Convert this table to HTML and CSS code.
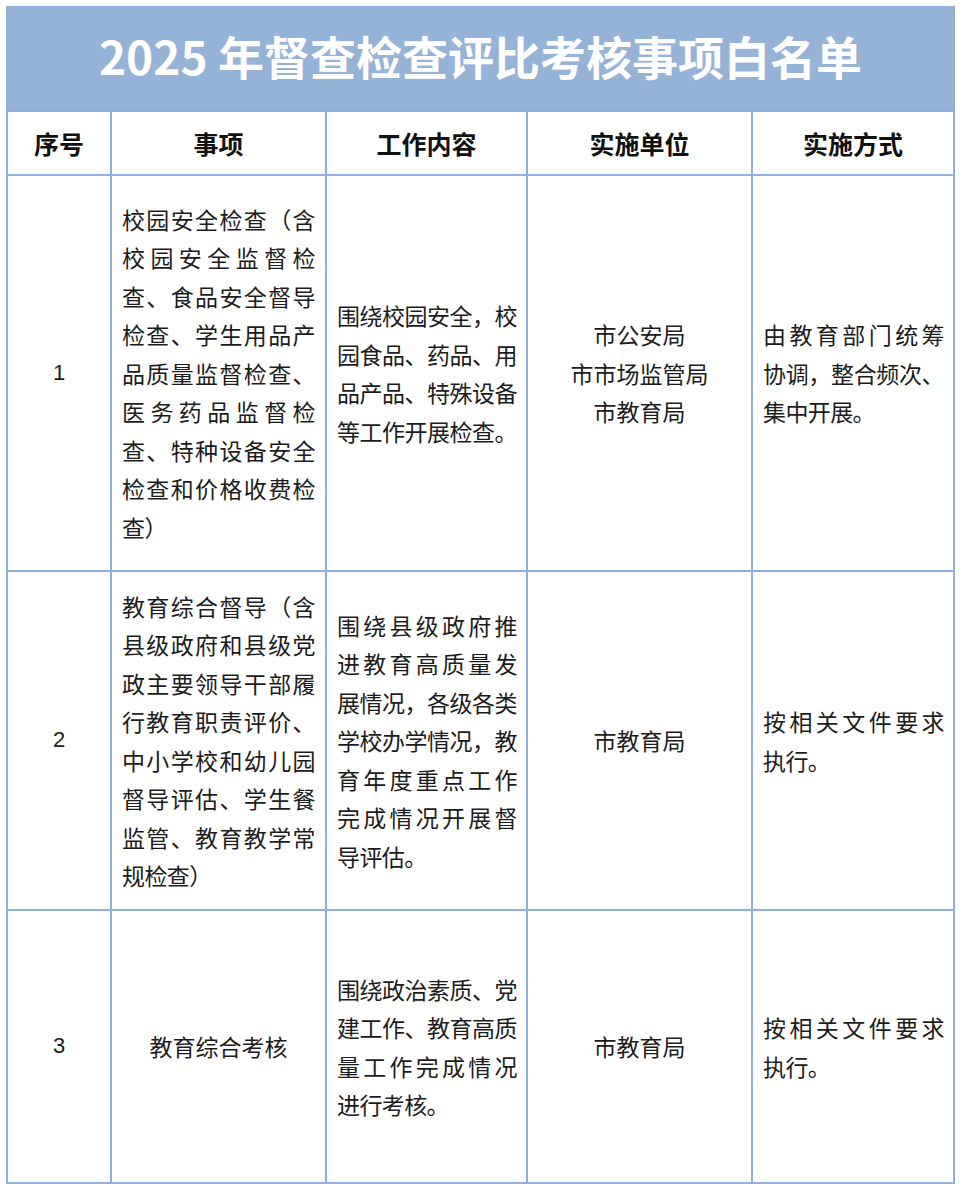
FILE: index.html
```html
<!DOCTYPE html>
<html lang="zh-CN">
<head>
<meta charset="utf-8">
<title>2025 年督查检查评比考核事项白名单</title>
<link rel="stylesheet" href="styles.css">
</head>
<body>
<div class="sheet">
  <div class="title">2025 年督查检查评比考核事项白名单</div>

  <div class="cell head">序号</div>
  <div class="cell head">事项</div>
  <div class="cell head">工作内容</div>
  <div class="cell head">实施单位</div>
  <div class="cell head">实施方式</div>

  <div class="cell num">1</div>
  <div class="cell text c2">
    <div class="ln">校园安全检查（含</div>
    <div class="ln">校园安全监督检</div>
    <div class="ln">查、食品安全督导</div>
    <div class="ln">检查、学生用品产</div>
    <div class="ln">品质量监督检查、</div>
    <div class="ln">医务药品监督检</div>
    <div class="ln">查、特种设备安全</div>
    <div class="ln">检查和价格收费检</div>
    <div class="ln end">查）</div>
  </div>
  <div class="cell text c3">
    <div class="ln">围绕校园安全，校</div>
    <div class="ln">园食品、药品、用</div>
    <div class="ln">品产品、特殊设备</div>
    <div class="ln">等工作开展检查。</div>
  </div>
  <div class="cell center">
    <div>市公安局</div>
    <div>市市场监管局</div>
    <div>市教育局</div>
  </div>
  <div class="cell text c5">
    <div class="ln">由教育部门统筹</div>
    <div class="ln">协调，整合频次、</div>
    <div class="ln end">集中开展。</div>
  </div>

  <div class="cell num">2</div>
  <div class="cell text c2">
    <div class="ln">教育综合督导（含</div>
    <div class="ln">县级政府和县级党</div>
    <div class="ln">政主要领导干部履</div>
    <div class="ln">行教育职责评价、</div>
    <div class="ln">中小学校和幼儿园</div>
    <div class="ln">督导评估、学生餐</div>
    <div class="ln">监管、教育教学常</div>
    <div class="ln end">规检查）</div>
  </div>
  <div class="cell text c3">
    <div class="ln">围绕县级政府推</div>
    <div class="ln">进教育高质量发</div>
    <div class="ln">展情况，各级各类</div>
    <div class="ln">学校办学情况，教</div>
    <div class="ln">育年度重点工作</div>
    <div class="ln">完成情况开展督</div>
    <div class="ln end">导评估。</div>
  </div>
  <div class="cell center">
    <div>市教育局</div>
  </div>
  <div class="cell text c5">
    <div class="ln">按相关文件要求</div>
    <div class="ln end">执行。</div>
  </div>

  <div class="cell num">3</div>
  <div class="cell center">
    <div>教育综合考核</div>
  </div>
  <div class="cell text c3">
    <div class="ln">围绕政治素质、党</div>
    <div class="ln">建工作、教育高质</div>
    <div class="ln">量工作完成情况</div>
    <div class="ln end">进行考核。</div>
  </div>
  <div class="cell center">
    <div>市教育局</div>
  </div>
  <div class="cell text c5">
    <div class="ln">按相关文件要求</div>
    <div class="ln end">执行。</div>
  </div>
</div>
</body>
</html>
```

FILE: styles.css
```css
html, body {
  margin: 0;
  padding: 0;
  background: #ffffff;
}

body {
  font-family: "Noto Sans CJK SC", "Noto Sans", sans-serif;
  color: #1c1c1c;
}

.sheet {
  margin: 6px 0 0 6px;
  width: 949px;
  box-sizing: border-box;
  display: grid;
  grid-template-columns: 104px 215px 201px 225px 202px;
  grid-template-rows: 104px 64px 396px 339px 273px;
  border-left: 2px solid #8fb0dc;
  border-top: 2px solid #8fb0dc;
}

.title {
  grid-column: 1 / -1;
  background: #95b3d7;
  color: #ffffff;
  font-weight: 700;
  font-size: 46px;
  display: flex;
  align-items: center;
  justify-content: center;
  border-right: 2px solid #8fb0dc;
  border-bottom: 2px solid #8fb0dc;
  padding-bottom: 9px;
  box-sizing: border-box;
}

.cell {
  box-sizing: border-box;
  border-right: 2px solid #8fb0dc;
  border-bottom: 2px solid #8fb0dc;
  display: flex;
  flex-direction: column;
  justify-content: center;
  font-size: 23px;
  line-height: 38.5px;
}

.head {
  align-items: center;
  font-weight: 700;
  font-size: 25px;
  color: #111111;
}

.num {
  align-items: center;
  font-family: "Liberation Sans", Arial, sans-serif;
  font-size: 22px;
}

.center {
  align-items: center;
  text-align: center;
}

.text {
  padding: 0 9px 0 10px;
}

.c2 {
  padding: 0 10px 0 10px;
}

.ln {
  letter-spacing: -0.6px;
  text-align: justify;
  text-align-last: justify;
}

.ln.end {
  text-align-last: left;
}
```
